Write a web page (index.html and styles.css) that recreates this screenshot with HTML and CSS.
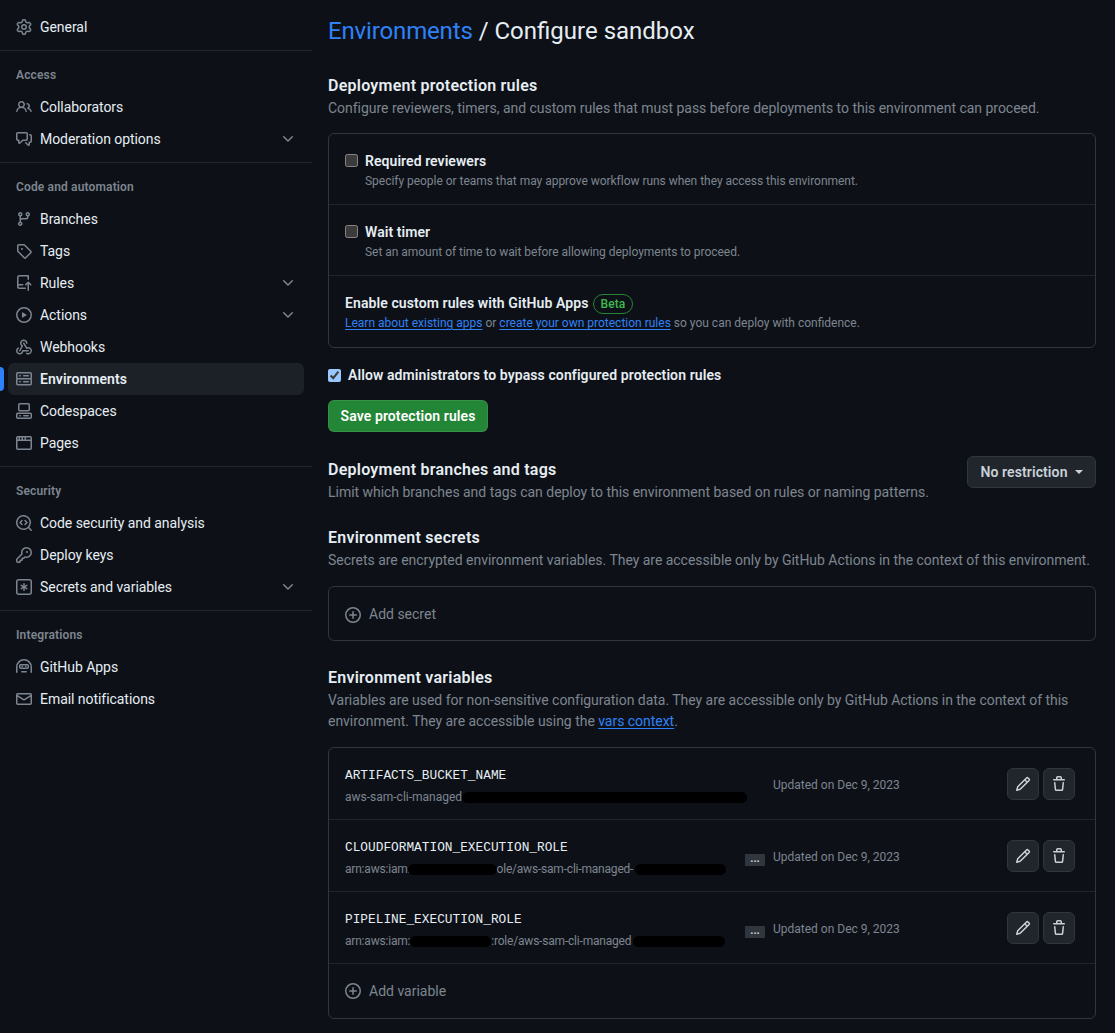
FILE: index.html
```html
<!DOCTYPE html>
<html lang="en">
<head>
<meta charset="utf-8">
<title>Configure sandbox</title>
<link rel="stylesheet" href="styles.css">
</head>
<body>
<svg class="sprite" aria-hidden="true">
<symbol id="i-gear" viewBox="0 0 16 16"><path d="M8 0a8.2 8.2 0 0 1 .701.031C9.444.095 9.99.645 10.16 1.29l.288 1.107c.018.066.079.158.212.224.231.114.454.243.668.386.123.082.233.09.299.071l1.103-.303c.644-.176 1.392.021 1.82.63.27.385.506.792.704 1.218.315.675.111 1.422-.364 1.891l-.814.806c-.049.048-.098.147-.088.294.016.257.016.515 0 .772-.01.147.038.246.088.294l.814.806c.475.469.679 1.216.364 1.891a7.977 7.977 0 0 1-.704 1.217c-.428.61-1.176.807-1.82.63l-1.102-.302c-.067-.019-.177-.011-.3.071a5.909 5.909 0 0 1-.668.386c-.133.066-.194.158-.211.224l-.29 1.106c-.168.646-.715 1.196-1.458 1.26a8.006 8.006 0 0 1-1.402 0c-.743-.064-1.289-.614-1.458-1.26l-.289-1.106c-.018-.066-.079-.158-.212-.224a5.738 5.738 0 0 1-.668-.386c-.123-.082-.233-.09-.299-.071l-1.103.303c-.644.176-1.392-.021-1.82-.63a8.12 8.12 0 0 1-.704-1.218c-.315-.675-.111-1.422.363-1.891l.815-.806c.05-.048.098-.147.088-.294a6.214 6.214 0 0 1 0-.772c.01-.147-.038-.246-.088-.294l-.815-.806C.635 6.045.431 5.298.746 4.623a7.92 7.92 0 0 1 .704-1.217c.428-.61 1.176-.807 1.82-.63l1.102.302c.067.019.177.011.3-.071.214-.143.437-.272.668-.386.133-.066.194-.158.211-.224l.29-1.106C6.009.645 6.556.095 7.299.03 7.53.01 7.764 0 8 0Zm-.571 1.525c-.036.003-.108.036-.137.146l-.289 1.105c-.147.561-.549.967-.998 1.189-.173.086-.34.183-.5.29-.417.278-.97.423-1.529.27l-1.103-.303c-.109-.03-.175.016-.195.045-.22.312-.412.644-.573.99-.014.031-.021.11.059.19l.815.806c.411.406.562.957.53 1.456a4.709 4.709 0 0 0 0 .582c.032.499-.119 1.05-.53 1.456l-.815.806c-.081.08-.073.159-.059.19.162.346.353.677.573.989.02.03.085.076.195.046l1.102-.303c.56-.153 1.113-.008 1.53.27.161.107.328.204.501.29.447.222.85.629.997 1.189l.289 1.105c.029.109.101.143.137.146a6.6 6.6 0 0 0 1.142 0c.036-.003.108-.036.137-.146l.289-1.105c.147-.561.549-.967.998-1.189.173-.086.34-.183.5-.29.417-.278.97-.423 1.529-.27l1.103.303c.109.029.175-.016.195-.045.22-.313.411-.644.573-.99.014-.031.021-.11-.059-.19l-.815-.806c-.411-.406-.562-.957-.53-1.456a4.709 4.709 0 0 0 0-.582c-.032-.499.119-1.05.53-1.456l.815-.806c.081-.08.073-.159.059-.19a6.464 6.464 0 0 0-.573-.989c-.02-.03-.085-.076-.195-.046l-1.102.303c-.56.153-1.113.008-1.53-.27a4.44 4.44 0 0 0-.501-.29c-.447-.222-.85-.629-.997-1.189l-.289-1.105c-.029-.11-.101-.143-.137-.146a6.6 6.6 0 0 0-1.142 0ZM11 8a3 3 0 1 1-6 0 3 3 0 0 1 6 0ZM9.5 8a1.5 1.5 0 1 0-3.001.001A1.5 1.5 0 0 0 9.5 8Z"/></symbol>
<symbol id="i-people" viewBox="0 0 16 16"><path d="M2 5.5a3.5 3.5 0 1 1 5.898 2.549 5.508 5.508 0 0 1 3.034 4.084.75.75 0 1 1-1.482.235 4 4 0 0 0-7.9 0 .75.75 0 0 1-1.482-.236A5.507 5.507 0 0 1 3.102 8.05 3.493 3.493 0 0 1 2 5.5ZM11 4a3.001 3.001 0 0 1 2.22 5.018 5.01 5.01 0 0 1 2.56 3.012.749.749 0 0 1-.885.954.752.752 0 0 1-.549-.514 3.507 3.507 0 0 0-2.522-2.372.75.75 0 0 1-.574-.73v-.352a.75.75 0 0 1 .416-.672A1.5 1.5 0 0 0 11 5.5.75.75 0 0 1 11 4Zm-5.5-.5a2 2 0 1 0-.001 3.999A2 2 0 0 0 5.5 3.5Z"/></symbol>
<symbol id="i-comment" viewBox="0 0 16 16"><path d="M1.75 1h8.5c.966 0 1.75.784 1.75 1.75v5.5A1.75 1.75 0 0 1 10.25 10H7.061l-2.574 2.573A1.458 1.458 0 0 1 2 11.543V10h-.25A1.75 1.75 0 0 1 0 8.25v-5.5C0 1.784.784 1 1.75 1ZM1.5 2.75v5.5c0 .138.112.25.25.25h1a.75.75 0 0 1 .75.75v2.19l2.72-2.72a.749.749 0 0 1 .53-.22h3.5a.25.25 0 0 0 .25-.25v-5.5a.25.25 0 0 0-.25-.25h-8.5a.25.25 0 0 0-.25.25Zm13 2a.25.25 0 0 0-.25-.25h-.5a.75.75 0 0 1 0-1.5h.5c.966 0 1.75.784 1.75 1.75v5.5A1.75 1.75 0 0 1 14.25 12H14v1.543a1.458 1.458 0 0 1-2.487 1.03L9.22 12.28a.749.749 0 0 1 .326-1.275.749.749 0 0 1 .734.215l2.22 2.22v-2.19a.75.75 0 0 1 .75-.75h1a.25.25 0 0 0 .25-.25Z"/></symbol>
<symbol id="i-branch" viewBox="0 0 16 16"><path d="M9.5 3.25a2.25 2.25 0 1 1 3 2.122V6A2.5 2.5 0 0 1 10 8.5H6a1 1 0 0 0-1 1v1.128a2.251 2.251 0 1 1-1.5 0V5.372a2.25 2.25 0 1 1 1.5 0v1.836A2.493 2.493 0 0 1 6 7h4a1 1 0 0 0 1-1v-.628A2.25 2.25 0 0 1 9.5 3.25Zm-6 0a.75.75 0 1 0 1.5 0 .75.75 0 0 0-1.5 0Zm8.25-.75a.75.75 0 1 0 0 1.5.75.75 0 0 0 0-1.5ZM4.25 12a.75.75 0 1 0 0 1.5.75.75 0 0 0 0-1.5Z"/></symbol>
<symbol id="i-tag" viewBox="0 0 16 16"><path d="M1 7.775V2.75C1 1.784 1.784 1 2.75 1h5.025c.464 0 .91.184 1.238.513l6.25 6.25a1.75 1.75 0 0 1 0 2.474l-5.026 5.026a1.75 1.75 0 0 1-2.474 0l-6.25-6.25A1.752 1.752 0 0 1 1 7.775Zm1.5 0c0 .066.026.13.073.177l6.25 6.25a.25.25 0 0 0 .354 0l5.025-5.025a.25.25 0 0 0 0-.354l-6.25-6.25a.25.25 0 0 0-.177-.073H2.75a.25.25 0 0 0-.25.25ZM6 5a1 1 0 1 1 0 2 1 1 0 0 1 0-2Z"/></symbol>
<symbol id="i-push" viewBox="0 0 16 16"><path d="M1 2.5A2.5 2.5 0 0 1 3.5 0h8.75a.75.75 0 0 1 .75.75v3.5a.75.75 0 0 1-1.5 0V1.5h-8a1 1 0 0 0-1 1v6.708A2.493 2.493 0 0 1 3.5 9h3.25a.75.75 0 0 1 0 1.5H3.5a1 1 0 0 0 0 2h5.75a.75.75 0 0 1 0 1.5H3.5A2.5 2.5 0 0 1 1 11.5Zm13.23 7.79-1.224-1.224v6.184a.75.75 0 0 1-1.5 0V9.066L10.28 10.29a.75.75 0 0 1-1.06-1.061l2.505-2.504a.75.75 0 0 1 1.06 0L15.29 9.23a.751.751 0 0 1-.018 1.042.751.751 0 0 1-1.042.018Z"/></symbol>
<symbol id="i-play" viewBox="0 0 16 16"><path d="M8 0a8 8 0 1 1 0 16A8 8 0 0 1 8 0ZM1.5 8a6.5 6.5 0 1 0 13 0 6.5 6.5 0 0 0-13 0Zm4.879-2.773 4.264 2.559a.25.25 0 0 1 0 .428l-4.264 2.559A.25.25 0 0 1 6 10.559V5.442a.25.25 0 0 1 .379-.215Z"/></symbol>
<symbol id="i-webhook" viewBox="0 0 16 16"><path d="M5.5 4.25a2.25 2.25 0 0 1 4.5 0 .75.75 0 0 0 1.5 0 3.75 3.75 0 1 0-6.14 2.889l-2.272 4.258a.75.75 0 0 0 1.324.706L7 7.25a.75.75 0 0 0-.309-1.015A2.25 2.25 0 0 1 5.5 4.25Z"/><path d="M7.364 3.607a.75.75 0 0 1 1.03.257l2.608 4.349a3.75 3.75 0 1 1-.628 6.785.75.75 0 0 1 .752-1.299 2.25 2.25 0 1 0-.033-3.88.75.75 0 0 1-1.03-.256L7.107 4.636a.75.75 0 0 1 .257-1.03Z"/><path d="M2.9 8.776A.75.75 0 0 1 2.625 9.8 2.25 2.25 0 1 0 6 11.75a.75.75 0 0 1 .75-.751h5.5a.75.75 0 0 1 0 1.5H7.425a3.751 3.751 0 1 1-5.55-3.998.75.75 0 0 1 1.024.274Z"/></symbol>
<symbol id="i-server" viewBox="0 0 16 16"><path d="M1.75 1h12.5c.966 0 1.75.784 1.75 1.75v4c0 .372-.116.717-.314 1 .198.283.314.628.314 1v4a1.75 1.75 0 0 1-1.75 1.75H1.75A1.75 1.75 0 0 1 0 12.75v-4c0-.358.109-.707.314-1a1.739 1.739 0 0 1-.314-1v-4C0 1.784.784 1 1.75 1ZM1.5 2.75v4c0 .138.112.25.25.25h12.5a.25.25 0 0 0 .25-.25v-4a.25.25 0 0 0-.25-.25H1.75a.25.25 0 0 0-.25.25Zm.25 5.75a.25.25 0 0 0-.25.25v4c0 .138.112.25.25.25h12.5a.25.25 0 0 0 .25-.25v-4a.25.25 0 0 0-.25-.25ZM7 4.75A.75.75 0 0 1 7.75 4h4.5a.75.75 0 0 1 0 1.5h-4.5A.75.75 0 0 1 7 4.75ZM7.75 10h4.5a.75.75 0 0 1 0 1.5h-4.5a.75.75 0 0 1 0-1.5ZM3 4.75A.75.75 0 0 1 3.75 4h.5a.75.75 0 0 1 0 1.5h-.5A.75.75 0 0 1 3 4.75ZM3.75 10h.5a.75.75 0 0 1 0 1.5h-.5a.75.75 0 0 1 0-1.5Z"/></symbol>
<symbol id="i-codespaces" viewBox="0 0 16 16"><path d="M0 11.25c0-.966.784-1.75 1.75-1.75h12.5c.966 0 1.75.784 1.75 1.75v3A1.75 1.75 0 0 1 14.25 16H1.75A1.75 1.75 0 0 1 0 14.25Zm2-9.5C2 .784 2.784 0 3.75 0h8.5C13.216 0 14 .784 14 1.75v5a1.75 1.75 0 0 1-1.75 1.75h-8.5A1.75 1.75 0 0 1 2 6.75Zm1.75-.25a.25.25 0 0 0-.25.25v5c0 .138.112.25.25.25h8.5a.25.25 0 0 0 .25-.25v-5a.25.25 0 0 0-.25-.25Zm-2 9.5a.25.25 0 0 0-.25.25v3c0 .138.112.25.25.25h12.5a.25.25 0 0 0 .25-.25v-3a.25.25 0 0 0-.25-.25Z"/><path d="M7 12.75a.75.75 0 0 1 .75-.75h4.5a.75.75 0 0 1 0 1.5h-4.5a.75.75 0 0 1-.75-.75Zm-4 0a.75.75 0 0 1 .75-.75h.5a.75.75 0 0 1 0 1.5h-.5a.75.75 0 0 1-.75-.75Z"/></symbol>
<symbol id="i-browser" viewBox="0 0 16 16"><path d="M0 2.75C0 1.784.784 1 1.75 1h12.5c.966 0 1.75.784 1.75 1.75v10.5A1.75 1.75 0 0 1 14.25 15H1.75A1.75 1.75 0 0 1 0 13.25ZM14.5 6h-13v7.25c0 .138.112.25.25.25h12.5a.25.25 0 0 0 .25-.25Zm-6-3.5h-1.5V4.5h1.5Zm-3 0h-1.5V4.5h1.5Zm-3 0h-.75a.25.25 0 0 0-.25.25V4.5h1Zm7.5 0V4.5h4.5V2.75a.25.25 0 0 0-.25-.25Z"/></symbol>
<symbol id="i-codescan" viewBox="0 0 16 16"><path d="M8.47 4.97a.75.75 0 0 0 0 1.06L9.94 7.5 8.47 8.97a.75.75 0 1 0 1.06 1.06l2-2a.75.75 0 0 0 0-1.06l-2-2a.75.75 0 0 0-1.06 0ZM6.53 6.03a.75.75 0 0 0-1.06-1.06l-2 2a.75.75 0 0 0 0 1.06l2 2a.75.75 0 1 0 1.06-1.06L5.06 7.5l1.47-1.47Z"/><path d="M12.246 13.307a7.501 7.501 0 1 1 1.06-1.06l2.474 2.473a.749.749 0 0 1-.326 1.275.749.749 0 0 1-.734-.215ZM1.5 7.5a6.002 6.002 0 0 0 3.608 5.504 6.002 6.002 0 0 0 6.486-1.117.748.748 0 0 1 .292-.293A6 6 0 1 0 1.5 7.5Z"/></symbol>
<symbol id="i-key" viewBox="0 0 16 16"><path d="M10.5 0a5.499 5.499 0 1 1-1.288 10.848l-.932.932a.749.749 0 0 1-.53.22H7v.75a.749.749 0 0 1-.22.53l-.5.5a.749.749 0 0 1-.53.22H5v.75a.749.749 0 0 1-.22.53l-.5.5a.749.749 0 0 1-.53.22h-2A1.75 1.75 0 0 1 0 14.25v-2c0-.199.079-.389.22-.53l4.932-4.932A5.5 5.5 0 0 1 10.5 0Zm-4 5.5c-.001.431.069.86.205 1.269a.75.75 0 0 1-.181.768L1.5 12.56v1.69c0 .138.112.25.25.25h1.69l.06-.06v-1.19a.75.75 0 0 1 .75-.75h1.19l.06-.06v-1.19a.75.75 0 0 1 .75-.75h1.19l1.023-1.025a.75.75 0 0 1 .768-.18A4 4 0 1 0 6.5 5.5ZM11 6a1 1 0 1 1 0-2 1 1 0 0 1 0 2Z"/></symbol>
<symbol id="i-asterisk" viewBox="0 0 16 16"><path d="M0 2.75A2.75 2.75 0 0 1 2.75 0h10.5A2.75 2.75 0 0 1 16 2.75v10.5A2.75 2.75 0 0 1 13.25 16H2.75A2.75 2.75 0 0 1 0 13.25ZM2.75 1.5c-.69 0-1.25.56-1.25 1.25v10.5c0 .69.56 1.25 1.25 1.25h10.5c.69 0 1.25-.56 1.25-1.25V2.75c0-.69-.56-1.25-1.25-1.25Z"/><path d="M8 4a.75.75 0 0 1 .75.75V6.7l1.69-.975a.75.75 0 0 1 .75 1.3L9.5 8l1.69.976a.75.75 0 0 1-.75 1.298L8.75 9.3v1.951a.75.75 0 0 1-1.5 0V9.299l-1.69.976a.75.75 0 0 1-.75-1.3L6.5 8l-1.69-.975a.75.75 0 0 1 .75-1.3l1.69.976V4.75A.75.75 0 0 1 8 4Z"/></symbol>
<symbol id="i-hubot" viewBox="0 0 16 16"><path d="M0 8a8 8 0 0 1 16 0v5.25a.75.75 0 0 1-1.5 0V8a6.5 6.5 0 1 0-13 0v5.25a.75.75 0 0 1-1.5 0Zm3-1.25C3 5.784 3.784 5 4.75 5h6.5c.966 0 1.75.784 1.75 1.75v1.5A1.75 1.75 0 0 1 11.25 10h-6.5A1.75 1.75 0 0 1 3 8.25ZM4.75 6.5a.25.25 0 0 0-.25.25v1.5c0 .138.112.25.25.25h6.5a.25.25 0 0 0 .25-.25v-1.5a.25.25 0 0 0-.25-.25ZM5.5 7.5a.75.75 0 1 1 1.5 0 .75.75 0 0 1-1.5 0Zm3.5 0a.75.75 0 1 1 1.5 0 .75.75 0 0 1-1.5 0ZM5.75 12h4.5a.75.75 0 0 1 0 1.5h-4.5a.75.75 0 0 1 0-1.5Z"/></symbol>
<symbol id="i-mail" viewBox="0 0 16 16"><path d="M1.75 2h12.5c.966 0 1.75.784 1.75 1.75v8.5A1.75 1.75 0 0 1 14.25 14H1.75A1.75 1.75 0 0 1 0 12.25v-8.5C0 2.784.784 2 1.75 2ZM1.5 12.251c0 .138.112.25.25.25h12.5a.25.25 0 0 0 .25-.25V5.809L8.38 9.397a.75.75 0 0 1-.76 0L1.5 5.809v6.442Zm13-8.181v-.32a.25.25 0 0 0-.25-.25H1.75a.25.25 0 0 0-.25.25v.32L8 7.88Z"/></symbol>
<symbol id="i-chevron" viewBox="0 0 16 16"><path d="M12.78 5.22a.749.749 0 0 1 0 1.06l-4.25 4.25a.749.749 0 0 1-1.06 0L3.22 6.28a.749.749 0 1 1 1.06-1.06L8 8.939l3.72-3.719a.749.749 0 0 1 1.06 0Z"/></symbol>
<symbol id="i-plus" viewBox="0 0 16 16"><path d="M8 0a8 8 0 1 1 0 16A8 8 0 0 1 8 0ZM1.5 8a6.5 6.5 0 1 0 13 0 6.5 6.5 0 0 0-13 0Zm7.25-3.25v2.5h2.5a.75.75 0 0 1 0 1.5h-2.5v2.5a.75.75 0 0 1-1.5 0v-2.5h-2.5a.75.75 0 0 1 0-1.5h2.5v-2.5a.75.75 0 0 1 1.5 0Z"/></symbol>
<symbol id="i-pencil" viewBox="0 0 16 16"><path d="M11.013 1.427a1.75 1.75 0 0 1 2.474 0l1.086 1.086a1.75 1.75 0 0 1 0 2.474l-8.61 8.61c-.21.21-.47.364-.756.445l-3.251.93a.75.75 0 0 1-.927-.928l.929-3.25c.081-.286.235-.547.445-.758l8.61-8.61Zm.176 4.823L9.75 4.81l-6.286 6.287a.253.253 0 0 0-.064.108l-.558 1.953 1.953-.558a.253.253 0 0 0 .108-.064Zm1.238-3.763a.25.25 0 0 0-.354 0L10.811 3.75l1.439 1.44 1.263-1.263a.25.25 0 0 0 0-.354Z"/></symbol>
<symbol id="i-trash" viewBox="0 0 16 16"><path d="M11 1.75V3h2.25a.75.75 0 0 1 0 1.5H2.75a.75.75 0 0 1 0-1.5H5V1.75C5 .784 5.784 0 6.75 0h2.5C10.216 0 11 .784 11 1.75ZM4.496 6.675l.66 6.6a.25.25 0 0 0 .249.225h5.19a.25.25 0 0 0 .249-.225l.66-6.6a.75.75 0 0 1 1.492.149l-.66 6.6A1.748 1.748 0 0 1 10.595 15h-5.19a1.75 1.75 0 0 1-1.741-1.575l-.66-6.6a.75.75 0 1 1 1.492-.15ZM6.5 1.75V3h3V1.75a.25.25 0 0 0-.25-.25h-2.5a.25.25 0 0 0-.25.25Z"/></symbol>
</svg>

<div class="layout">
  <nav class="sidebar">
    <div class="group group-first">
      <a class="item"><svg class="icon"><use href="#i-gear"/></svg><span>General</span></a>
    </div>
    <div class="group">
      <div class="group-title">Access</div>
      <a class="item"><svg class="icon"><use href="#i-people"/></svg><span>Collaborators</span></a>
      <a class="item"><svg class="icon"><use href="#i-comment"/></svg><span>Moderation options</span><svg class="icon chevron"><use href="#i-chevron"/></svg></a>
    </div>
    <div class="group">
      <div class="group-title">Code and automation</div>
      <a class="item"><svg class="icon"><use href="#i-branch"/></svg><span>Branches</span></a>
      <a class="item"><svg class="icon"><use href="#i-tag"/></svg><span>Tags</span></a>
      <a class="item"><svg class="icon"><use href="#i-push"/></svg><span>Rules</span><svg class="icon chevron"><use href="#i-chevron"/></svg></a>
      <a class="item"><svg class="icon"><use href="#i-play"/></svg><span>Actions</span><svg class="icon chevron"><use href="#i-chevron"/></svg></a>
      <a class="item"><svg class="icon"><use href="#i-webhook"/></svg><span>Webhooks</span></a>
      <a class="item item-active"><svg class="icon"><use href="#i-server"/></svg><span>Environments</span></a>
      <a class="item"><svg class="icon"><use href="#i-codespaces"/></svg><span>Codespaces</span></a>
      <a class="item"><svg class="icon"><use href="#i-browser"/></svg><span>Pages</span></a>
    </div>
    <div class="group">
      <div class="group-title">Security</div>
      <a class="item"><svg class="icon"><use href="#i-codescan"/></svg><span>Code security and analysis</span></a>
      <a class="item"><svg class="icon"><use href="#i-key"/></svg><span>Deploy keys</span></a>
      <a class="item"><svg class="icon"><use href="#i-asterisk"/></svg><span>Secrets and variables</span><svg class="icon chevron"><use href="#i-chevron"/></svg></a>
    </div>
    <div class="group group-last">
      <div class="group-title">Integrations</div>
      <a class="item"><svg class="icon"><use href="#i-hubot"/></svg><span>GitHub Apps</span></a>
      <a class="item"><svg class="icon"><use href="#i-mail"/></svg><span>Email notifications</span></a>
    </div>
  </nav>

  <main class="main">
    <h1 class="page-title"><a class="title-link">Environments</a> / Configure sandbox</h1>

    <section class="section-protection">
      <h2 class="section-title">Deployment protection rules</h2>
      <p class="section-desc">Configure reviewers, timers, and custom rules that must pass before deployments to this environment can proceed.</p>
      <div class="box box-rules">
        <div class="rule">
          <label class="rule-title"><input type="checkbox" class="check"> Required reviewers</label>
          <div class="rule-desc">Specify people or teams that may approve workflow runs when they access this environment.</div>
        </div>
        <div class="rule">
          <label class="rule-title"><input type="checkbox" class="check"> Wait timer</label>
          <div class="rule-desc">Set an amount of time to wait before allowing deployments to proceed.</div>
        </div>
        <div class="rule">
          <div class="custom-title">Enable custom rules with GitHub Apps <span class="beta">Beta</span></div>
          <div class="custom-desc"><a class="link">Learn about existing apps</a> or <a class="link">create your own protection rules</a> so you can deploy with confidence.</div>
        </div>
      </div>
      <label class="bypass"><input type="checkbox" class="check" checked> Allow administrators to bypass configured protection rules</label>
      <button class="btn-save">Save protection rules</button>
    </section>

    <section class="section-branches">
      <div class="branches-text">
        <h2 class="section-title">Deployment branches and tags</h2>
        <p class="section-desc">Limit which branches and tags can deploy to this environment based on rules or naming patterns.</p>
      </div>
      <button class="btn-select">No restriction <span class="caret"></span></button>
    </section>

    <section class="section-secrets">
      <h2 class="section-title">Environment secrets</h2>
      <p class="section-desc">Secrets are encrypted environment variables. They are accessible only by GitHub Actions in the context of this environment.</p>
      <div class="box box-secrets">
        <a class="add-row"><svg class="icon"><use href="#i-plus"/></svg>Add secret</a>
      </div>
    </section>

    <section class="section-vars">
      <h2 class="section-title">Environment variables</h2>
      <p class="section-desc">Variables are used for non-sensitive configuration data. They are accessible only by GitHub Actions in the context of this environment. They are accessible using the <a class="link">vars context</a>.</p>
      <div class="box box-vars">
        <div class="var-row">
          <div class="var-info">
            <div class="var-name">ARTIFACTS_BUCKET_NAME</div>
            <div class="var-value">aws-sam-cli-managed<span class="redact redact-a"></span></div>
          </div>
          <div class="var-date">Updated on Dec 9, 2023</div>
          <div class="var-actions">
            <button class="btn-icon"><svg class="icon"><use href="#i-pencil"/></svg></button>
            <button class="btn-icon"><svg class="icon"><use href="#i-trash"/></svg></button>
          </div>
        </div>
        <div class="var-row">
          <div class="var-info">
            <div class="var-name">CLOUDFORMATION_EXECUTION_ROLE</div>
            <div class="var-value var-arn">arn:aws:iam.<span class="redact redact-b"></span>ole/aws-sam-cli-managed-<span class="redact redact-c"></span><span class="more">...</span></div>
          </div>
          <div class="var-date">Updated on Dec 9, 2023</div>
          <div class="var-actions">
            <button class="btn-icon"><svg class="icon"><use href="#i-pencil"/></svg></button>
            <button class="btn-icon"><svg class="icon"><use href="#i-trash"/></svg></button>
          </div>
        </div>
        <div class="var-row">
          <div class="var-info">
            <div class="var-name">PIPELINE_EXECUTION_ROLE</div>
            <div class="var-value var-arn">arn:aws:iam:<span class="redact redact-d"></span>:role/aws-sam-cli-managed<span class="redact redact-e"></span><span class="more">...</span></div>
          </div>
          <div class="var-date">Updated on Dec 9, 2023</div>
          <div class="var-actions">
            <button class="btn-icon"><svg class="icon"><use href="#i-pencil"/></svg></button>
            <button class="btn-icon"><svg class="icon"><use href="#i-trash"/></svg></button>
          </div>
        </div>
        <a class="add-row add-var"><svg class="icon"><use href="#i-plus"/></svg>Add variable</a>
      </div>
    </section>
  </main>
</div>
</body>
</html>
```
FILE: styles.css
```css
* { box-sizing: border-box; }
html { color-scheme: dark; }
body {
  margin: 0;
  background: #0d1117;
  color: #e6edf3;
  font-family: Roboto, "Noto Sans", sans-serif;
  font-size: 14px;
  line-height: 21px;
  height: 1033px;
  overflow: hidden;
}
.sprite { display: none; }
.layout { display: flex; align-items: flex-start; }
.icon { width: 16px; height: 16px; fill: #7d8590; flex: none; display: block; }

.sidebar { width: 312px; flex: none; padding-top: 11px; }
.group { padding: 8px 0 7px; border-bottom: 1px solid #21262d; }
.group-first { padding-top: 0; }
.group-last { border-bottom: 0; }
.group-title {
  height: 32px;
  padding-left: 16px;
  font-size: 12px;
  font-weight: 600;
  line-height: 32px;
  letter-spacing: .15px;
  color: #7d8590;
}
.item {
  position: relative;
  display: flex;
  align-items: center;
  gap: 8px;
  height: 32px;
  margin: 0 8px;
  padding: 0 8px;
  border-radius: 6px;
  color: #e6edf3;
  letter-spacing: -.05px;
}
.item span { padding-top: 1px; }
.chevron { margin-left: auto; }
.item-active { background: #1c2128; font-weight: 600; letter-spacing: .05px; }
.item-active::before {
  content: "";
  position: absolute;
  left: -8px;
  top: 4px;
  width: 4px;
  height: 24px;
  border-radius: 0 6px 6px 0;
  background: #2f81f7;
}

.main { width: 768px; margin-left: 16px; padding-top: 14px; }
.page-title { margin: 0; font-size: 24px; line-height: 34px; font-weight: 400; padding-bottom: 2px; }
.title-link { color: #2f81f7; letter-spacing: -.15px; }
.section-title { margin: 0; font-size: 16px; line-height: 24px; font-weight: 600; letter-spacing: .24px; }
.section-desc { margin: 0; color: #7d8590; letter-spacing: -.03px; }
.link { color: #2f81f7; text-decoration: underline; text-underline-offset: 2px; }

.section-protection { margin-top: 24px; }
.box { border: 1px solid #30363d; border-radius: 6px; }
.box-rules { margin-top: 14px; }
.rule { height: 71px; padding: 17px 16px 0; border-bottom: 1px solid #21262d; }
.rule:last-child { border-bottom: 0; height: 71px; }
.rule-title { display: flex; align-items: center; gap: 7px; font-weight: 600; letter-spacing: .06px; }
.rule-title .check { margin-bottom: 2px; }
.check { width: 13px; height: 13px; margin: 0; flex: none; }
.rule-desc { margin-left: 20px; font-size: 12px; line-height: 18px; color: #7d8590; letter-spacing: -.03px; }
.custom-title { display: flex; align-items: center; gap: 4px; font-weight: 600; height: 21px; letter-spacing: .1px; }
.beta {
  height: 20px;
  padding: 0 7px;
  border: 1px solid #238636;
  border-radius: 10px;
  color: #3fb950;
  font-size: 12px;
  font-weight: 500;
  line-height: 18px;
}
.custom-desc { font-size: 12px; line-height: 18px; color: #7d8590; }
.bypass { display: flex; align-items: center; gap: 7px; margin-top: 17px; font-weight: 600; letter-spacing: .1px; }
.btn-save {
  display: block;
  width: 160px;
  height: 32px;
  margin-top: 14px;
  padding: 0;
  border: 1px solid rgba(240, 246, 252, .1);
  border-radius: 6px;
  background: #238636;
  color: #fff;
  font: 600 14px/20px Roboto, sans-serif;
  letter-spacing: .1px;
}

.section-branches { display: flex; justify-content: space-between; margin-top: 24px; }
.branches-text { padding-top: 2px; }
.btn-select {
  display: flex;
  align-items: center;
  justify-content: center;
  gap: 7px;
  width: 129px;
  height: 32px;
  padding: 0;
  border: 1px solid #30363d;
  border-radius: 6px;
  background: #21262d;
  color: #c9d1d9;
  font: 600 14px/20px Roboto, sans-serif;
  letter-spacing: .1px;
}
.caret { width: 0; height: 0; border: 4px solid transparent; border-top-color: #c9d1d9; border-bottom: 0; }

.section-secrets { margin-top: 23px; }
.box-secrets { margin-top: 15px; height: 55px; }
.add-row { display: flex; align-items: center; gap: 8px; color: #7d8590; }
.box-secrets .add-row { height: 53px; padding: 2px 0 0 16px; }

.section-vars { margin-top: 25px; }
.box-vars { margin-top: 15px; }
.var-row {
  display: flex;
  align-items: center;
  height: 72px;
  padding: 0 20px 0 16px;
  border-bottom: 1px solid #21262d;
}
.var-info { position: relative; width: 420px; flex: none; padding-top: 6px; }
.var-name { font: 12.8px/18px "Liberation Mono", "DejaVu Sans Mono", monospace; color: #e6edf3; }
.var-value { display: flex; align-items: center; margin-top: 3px; font-size: 12px; line-height: 18px; color: #7d8590; }
.var-arn { letter-spacing: -.2px; }
.redact { display: block; height: 11px; border-radius: 6px; background: #000; flex: none; }
.redact-a { width: 285px; }
.redact-b { width: 89px; margin-left: -3px; }
.redact-c { width: 91px; margin-left: 2px; }
.redact-d { width: 81px; }
.redact-e { width: 92px; margin-left: 2px; }
.more {
  position: absolute;
  right: 0;
  top: 21px;
  width: 20px;
  height: 12px;
  background: #30363d;
  color: #c9d1d9;
  font-size: 11px;
  font-weight: 700;
  line-height: 10px;
  text-align: center;
  letter-spacing: 0;
}
.var-date { margin-left: 8px; padding-top: 2px; font-size: 12px; line-height: 18px; color: #7d8590; }
.var-actions { display: flex; gap: 4px; margin-left: auto; }
.btn-icon {
  display: flex;
  align-items: center;
  justify-content: center;
  width: 32px;
  height: 32px;
  padding: 0;
  border: 1px solid #30363d;
  border-radius: 6px;
  background: #21262d;
}
.btn-icon .icon { fill: #c9d1d9; }
.add-var { height: 54px; padding-left: 16px; }
```
